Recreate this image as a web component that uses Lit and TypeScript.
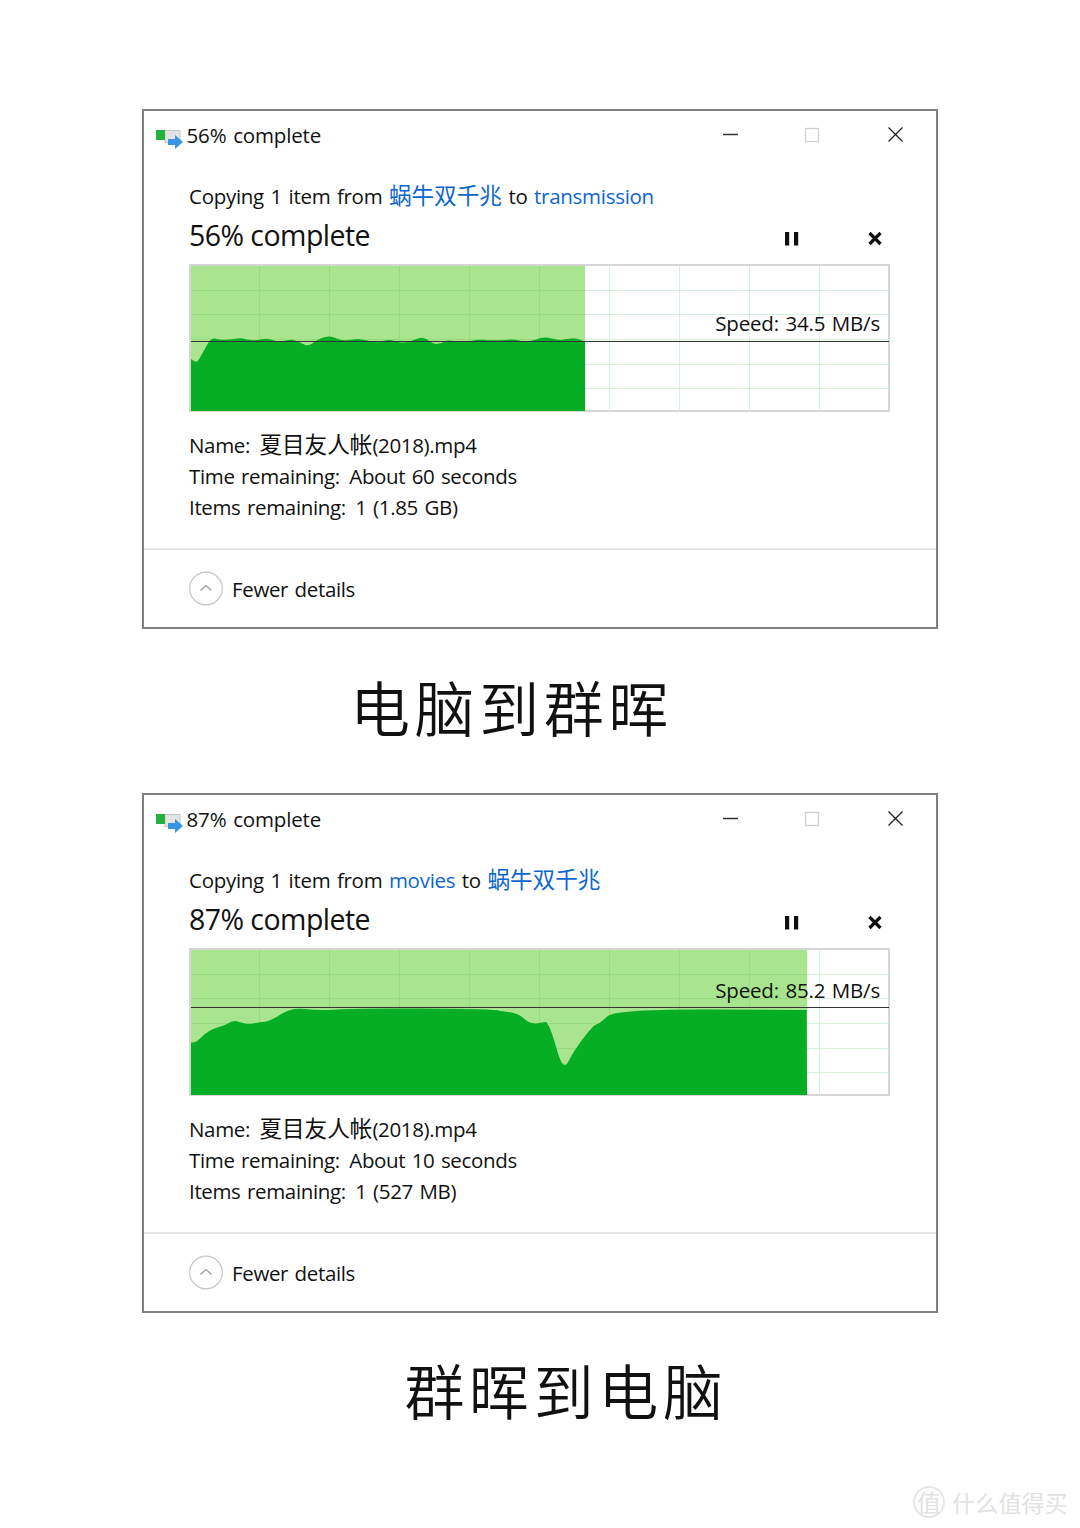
import { LitElement, html, css, svg } from "lit";
import { customElement, property } from "lit/decorators.js";

type P = [number, number];
const W = 698, H = 145;

const CHART1: P[] = ([[15,295],[30,307],[40,303],[55,275],[78,233],[100,238],[115,240],[130,238],[145,237],[170,234],[195,241],[215,241],[245,234],[275,245],[295,244],[320,237],[345,247],[370,260],[395,240],[425,228],[445,231],[470,241],[495,240],[525,235],[570,248],[590,244],[610,239],[630,243],[650,249],[675,245],[705,232],[725,236],[745,253],[770,250],[785,241],[815,243],[840,247],[880,238],[910,241],[950,241],[985,237],[1020,246],[1050,240],[1080,230],[1120,241],[1140,238],[1165,234],[1185,238],[1200,246]] as P[])
  .map(([x, y]) => [x / 3 - 6, y / 3 - 6] as P);

const CHART2: P[] = [
  ...([[18,292],[30,296],[70,256],[120,241],[145,226],[165,231],[190,238],[225,231],[255,229],[318,188],[385,195],[450,195],[480,191],[780,190],[930,194],[950,199],[1000,205],[1035,238],[1080,231]] as P[])
    .map(([x, y]) => [x / 3 - 6, y / 3 - 5] as P),
  ...([[50,231],[65,260],[100,380],[130,320],[190,240],[210,235],[255,192],[830,195]] as P[])
    .map(([x, y]) => [x / 3 + 339, y / 3 - 5] as P),
];

function smooth(pts: P[], fillW: number): string {
  let d = `M0 ${H} L${pts[0][0].toFixed(1)} ${pts[0][1].toFixed(1)}`;
  for (let i = 1; i < pts.length - 1; i++) {
    const mx = (pts[i][0] + pts[i + 1][0]) / 2;
    const my = (pts[i][1] + pts[i + 1][1]) / 2;
    d += ` Q${pts[i][0].toFixed(1)} ${pts[i][1].toFixed(1)} ${mx.toFixed(1)} ${my.toFixed(1)}`;
  }
  const last = pts[pts.length - 1];
  d += ` L${last[0].toFixed(1)} ${last[1].toFixed(1)} L${fillW} ${H}Z`;
  return d;
}

@customElement("copy-dialog")
class CopyDialog extends LitElement {
  @property() percent = "";
  @property() speed = "";
  @property() time = "";
  @property() items = "";
  @property({ type: Number }) fillW = 0;
  @property({ type: Number }) lineY = 0;
  @property({ type: Number }) speedY = 0;
  @property({ type: Array }) points: P[] = [];
  @property({ type: Boolean }) reverse = false;

  static styles = css`
    :host { display: block; }
    .dlg {
      box-sizing: border-box; width: 796px; height: 520px; border: 2px solid #7f7f7f;
      background: #fff; display: flex; flex-direction: column; color: #111;
      font-family: "Open Sans", "Noto Sans CJK SC", sans-serif; font-size: 20.5px;
      letter-spacing: -0.35px; word-spacing: 1.5px;
    }
    .cjk { font-size: 22.6px; letter-spacing: 0; line-height: 1; }
    .title { height: 48px; display: flex; align-items: center; position: relative; padding-left: 10px; letter-spacing: -0.15px; }
    .title svg.ic { width: 31px; height: 22px; margin-right: 2px; margin-top: 12px; }
    .ctl { position: absolute; top: -1px; left: 0; width: 792px; height: 48px; pointer-events: none; }
    .body { padding: 0 47px 0 45.5px; }
    .msg { height: 31px; line-height: 31px; margin-top: 22px; white-space: pre; letter-spacing: -0.28px; }
    .msg .cjk { letter-spacing: 0; }
    .link { color: #0d66d0; }
    .head { height: 40px; margin-top: 2.5px; display: flex; align-items: center; position: relative; font-size: 28.5px; letter-spacing: -0.55px; word-spacing: 0; }
    .head svg { position: absolute; left: 0; top: 0; width: 700px; height: 48px; }
    .chart { position: relative; box-sizing: border-box; width: 701px; height: 148px; margin-top: 9px; border: 2px solid #d6d6d6; }
    .chart svg { display: block; width: ${W}px; height: ${H}px; }
    .speed { position: absolute; right: 8px; line-height: 30px; white-space: pre; letter-spacing: -0.2px; }
    .info { margin-top: 18px; }
    .row { height: 31px; line-height: 31px; white-space: pre; }
    .val { margin-left: 3px; }
    .foot { margin-top: auto; height: 77px; border-top: 2px solid #e6e6e6; display: flex; align-items: center; padding-left: 45.5px; gap: 8px; }
    .foot svg { width: 35px; height: 35px; margin-top: -1px; }
    .foot span { margin-top: 1px; }
  `;

  render() {
    const vs = [0, 1, 2, 3, 4, 5, 6, 7, 8].map((i) => 68.5 + i * 70);
    const hs = [24, 48, 73, 98, 122];
    const grid = (color: string, xMax: number) => svg`
      ${vs.filter((x) => x < xMax).map((x) => svg`<line x1=${x} x2=${x} y1="0" y2=${H} stroke=${color} />`)}
      ${hs.map((y) => svg`<line x1="0" x2=${xMax} y1=${y + 0.5} y2=${y + 0.5} stroke=${color} />`)}`;
    return html`<div class="dlg">
      <div class="title">
        <svg class="ic" viewBox="0 0 31 22">
          <rect x="11" y="0.5" width="15" height="12" fill="#e4e4e4" stroke="#c8c8c8" />
          <rect x="2" y="0" width="9" height="10" fill="#22b13a" />
          <path d="M14 9h7V5l8 7-8 7v-4h-7z" fill="#3a94e4" />
        </svg>
        <span>${this.percent} complete</span>
        <svg class="ctl" viewBox="0 0 792 48">
          <line x1="579" x2="594" y1="24.5" y2="24.5" stroke="#333" stroke-width="1.5" />
          <rect x="661.5" y="18.5" width="13" height="13" fill="none" stroke="#cfcfcf" stroke-width="1.3" />
          <path d="M744.5 17.5l14 14M758.5 17.5l-14 14" stroke="#222" stroke-width="1.3" fill="none" />
        </svg>
      </div>
      <div class="body">
        <div class="msg">${this.reverse
          ? html`Copying 1 item from <span class="link">movies</span> to <span class="link cjk">蜗牛双千兆</span>`
          : html`Copying 1 item from <span class="link cjk">蜗牛双千兆</span> to <span class="link">transmission</span>`}</div>
        <div class="head">
          <span>${this.percent} complete</span>
          <svg viewBox="0 0 700 48">
            <rect x="596" y="17" width="4.2" height="13.5" fill="#111" />
            <rect x="605" y="17" width="4.2" height="13.5" fill="#111" />
            <path d="M680.5 18l11 11M691.5 18l-11 11" stroke="#111" stroke-width="3.2" fill="none" />
          </svg>
        </div>
        <div class="chart">
          <svg viewBox="0 0 ${W} ${H}">
            ${grid("#d6f2da", W)}
            <rect x="0" y="0" width=${this.fillW} height=${H} fill="#a9e58f" />
            ${grid("#98da80", this.fillW)}
            <path d=${smooth(this.points, this.fillW)} fill="#05ae25" />
            <line x1="0" x2=${W} y1=${this.lineY} y2=${this.lineY} stroke="#333" stroke-width="1" />
          </svg>
          <span class="speed" style="top:${this.speedY}px">Speed: ${this.speed}</span>
        </div>
        <div class="info">
          <div class="row">Name: <span class="val cjk">夏目友人帐</span>(2018).mp4</div>
          <div class="row">Time remaining: <span class="val">${this.time}</span></div>
          <div class="row">Items remaining: <span class="val">${this.items}</span></div>
        </div>
      </div>
      <div class="foot">
        <svg viewBox="0 0 35 35">
          <circle cx="17" cy="17.5" r="16.3" fill="none" stroke="#c6c6c6" stroke-width="1.2" />
          <path d="M11.5 19.5l5.5-5 5.5 5" fill="none" stroke="#9a9a9a" stroke-width="1.2" />
        </svg>
        <span>Fewer details</span>
      </div>
    </div>`;
  }
}

@customElement("app-root")
class AppRoot extends LitElement {
  static styles = css`
    :host { display: block; position: relative; width: 1080px; height: 1528px; background: #fff; overflow: hidden; }
    .page { padding: 109px 0 0 141.5px; }
    .cap {
      font-family: "Noto Sans CJK SC", sans-serif; font-weight: 350; font-size: 60px; letter-spacing: 4.6px;
      color: #111; line-height: 80px; white-space: nowrap;
    }
    .cap1 { margin: 37px 0 47px 208.5px; }
    .cap2 { margin: 36px 0 0 263px; }
    .wm { position: absolute; left: 913px; top: 1485px; display: flex; align-items: center; gap: 7px; color: #e2e2e2; font-family: "Noto Sans CJK SC", sans-serif; white-space: nowrap; }
    .wm .badge { width: 28px; height: 28px; border: 2px solid #e6e6e6; border-radius: 50%; display: flex; align-items: center; justify-content: center; font-size: 24px; line-height: 1; }
    .wm .txt { font-size: 23px; letter-spacing: 0.2px; }
  `;
  render() {
    return html`<div class="page">
        <copy-dialog percent="56%" speed="34.5 MB/s" time="About 60 seconds" items="1 (1.85 GB)"
          .fillW=${394} .lineY=${75.5} .speedY=${42} .points=${CHART1}></copy-dialog>
        <div class="cap cap1">电脑到群晖</div>
        <copy-dialog percent="87%" speed="85.2 MB/s" time="About 10 seconds" items="1 (527 MB)" reverse
          .fillW=${616} .lineY=${57.5} .speedY=${25} .points=${CHART2}></copy-dialog>
        <div class="cap cap2">群晖到电脑</div>
      </div>
      <div class="wm"><span class="badge">值</span><span class="txt">什么值得买</span></div>`;
  }
}
